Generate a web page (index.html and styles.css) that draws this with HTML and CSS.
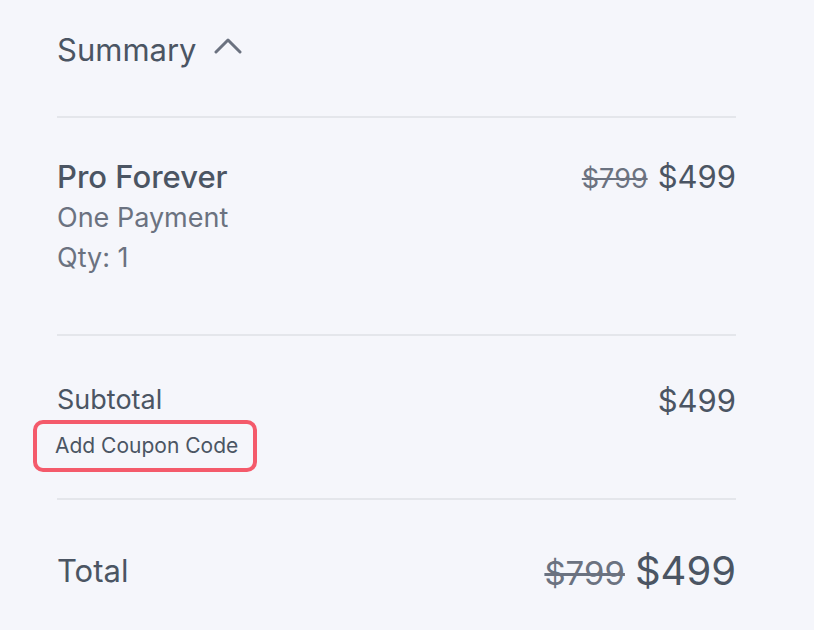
FILE: index.html
```html
<!DOCTYPE html>
<html lang="en">
<head>
    <meta charset="UTF-8">
    <meta name="viewport" content="width=device-width, initial-scale=1.0">
    <title>Summary</title>
    <link rel="stylesheet" href="styles.css">
</head>
<body>
    <div class="summary">
        <div class="summary-header">
            <h2>Summary</h2>
            <svg class="chevron" width="28" height="16" viewBox="0 0 28 16">
                <path d="M2 14 L14 2 L26 14" fill="none" stroke="#6b7280" stroke-width="3" stroke-linecap="round" stroke-linejoin="round"/>
            </svg>
        </div>

        <div class="section product">
            <div class="product-info">
                <div class="product-name">Pro Forever</div>
                <div class="muted">One Payment</div>
                <div class="muted">Qty: 1</div>
            </div>
            <div class="price">
                <span class="old-price">$799</span>
                <span class="new-price">$499</span>
            </div>
        </div>

        <div class="section subtotal">
            <div>
                <div class="label">Subtotal</div>
                <button class="coupon-btn">Add Coupon Code</button>
            </div>
            <div class="new-price">$499</div>
        </div>

        <div class="total">
            <div class="total-label">Total</div>
            <div class="price">
                <span class="old-price total-old">$799</span>
                <span class="new-price total-new">$499</span>
            </div>
        </div>
    </div>
</body>
</html>
```

FILE: styles.css
```css
* {
    margin: 0;
    padding: 0;
    box-sizing: border-box;
}

body {
    font-family: Inter, 'Noto Sans', sans-serif;
    background: #f5f6fb;
    color: #4b5563;
    min-height: 100vh;
}

.summary {
    padding: 0 78px 0 57px;
}

.summary-header {
    display: flex;
    align-items: center;
    gap: 17px;
    height: 118px;
    padding-bottom: 18px;
    border-bottom: 2px solid #e4e6eb;
}

.summary-header h2 {
    font-size: 31px;
    font-weight: 400;
}

.chevron {
    margin-top: -6px;
}

.section {
    display: flex;
    justify-content: space-between;
    align-items: flex-start;
    border-bottom: 2px solid #e4e6eb;
}

.product {
    height: 218px;
    padding-top: 40px;
}

.product-name {
    font-size: 31px;
    font-weight: 500;
    margin-bottom: 3px;
}

.muted {
    font-size: 27px;
    color: #6b7280;
    line-height: 40px;
}

.price {
    display: flex;
    align-items: baseline;
    gap: 10px;
}

.old-price {
    font-size: 27px;
    color: #6b7280;
    text-decoration: line-through;
}

.new-price {
    font-size: 31px;
}

.subtotal {
    height: 164px;
    padding-top: 46px;
}

.label {
    font-size: 27px;
    line-height: 36px;
}

.coupon-btn {
    margin: 2px 0 0 -24px;
    padding: 9px 15px 10px 18px;
    background: none;
    border: 4px solid #f45a6b;
    border-radius: 10px;
    font-family: inherit;
    font-size: 21px;
    color: #4b5563;
    cursor: pointer;
}

.total {
    display: flex;
    justify-content: space-between;
    align-items: center;
    padding-top: 46px;
}

.total-label {
    font-size: 31px;
}

.total-old {
    font-size: 33px;
}

.total-new {
    font-size: 40px;
}
```
